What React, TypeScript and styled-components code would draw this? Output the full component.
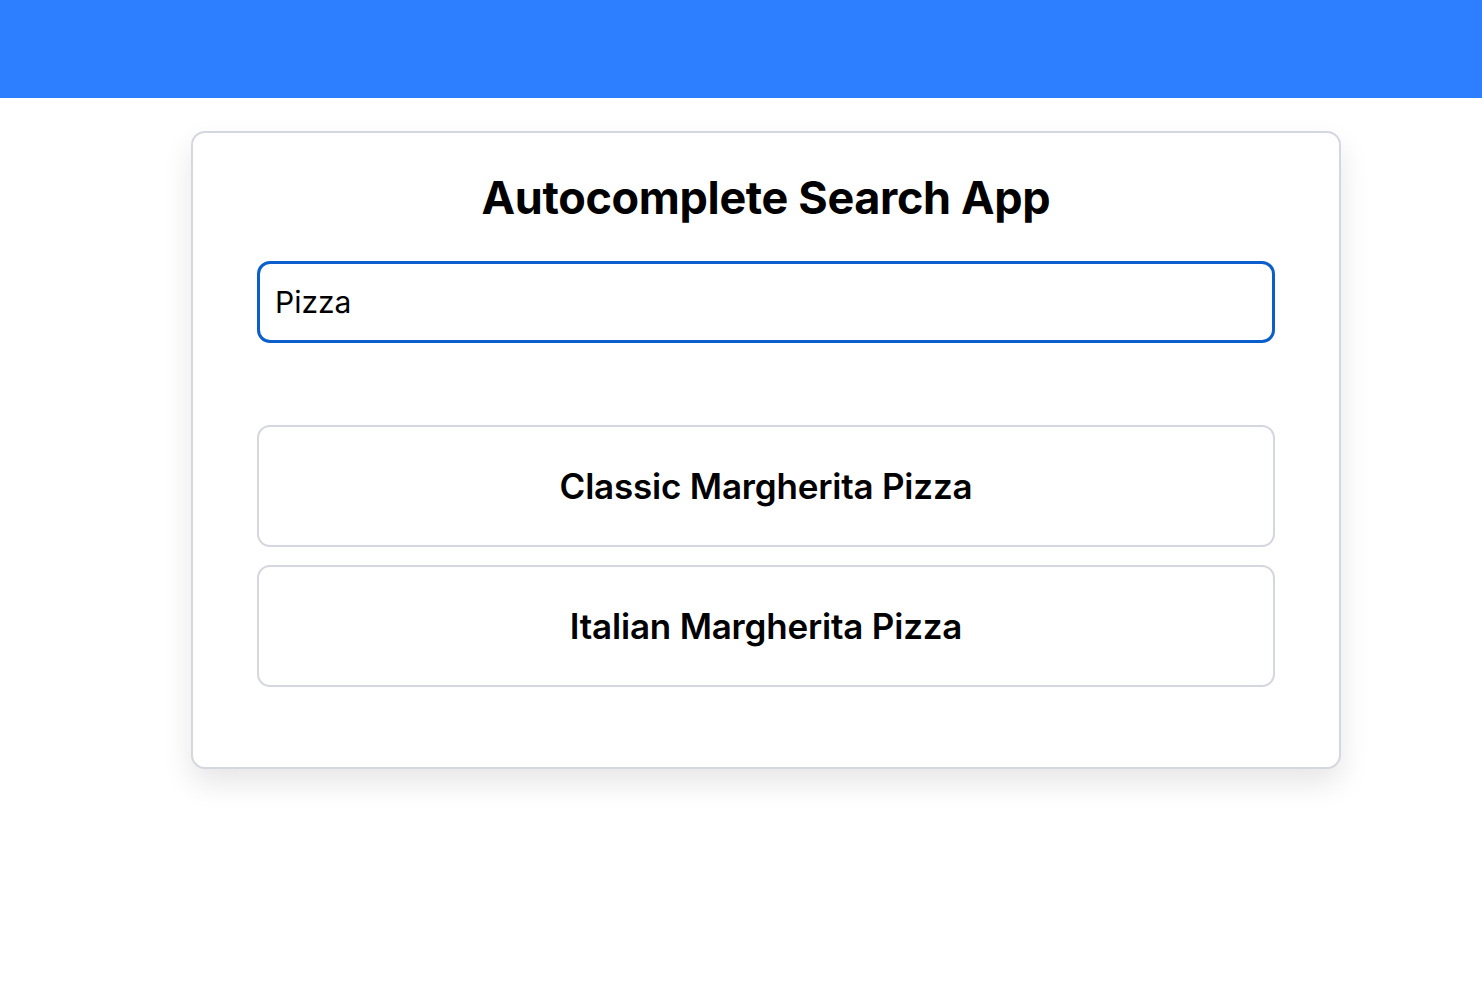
import React from "react";
import styled, { createGlobalStyle } from "styled-components";

const Global = createGlobalStyle`
  html, body { margin: 0; padding: 0; background: #ffffff; }
  body { font-family: Inter, "Noto Sans", sans-serif; color: #000; }
`;

const Header = styled.header`
  height: 98px;
  background: #2e7fff;
`;

const Main = styled.main`
  display: flex;
  justify-content: center;
  padding: 33px 0 120px 50px;
  min-height: 760px;
`;

const Card = styled.section`
  box-sizing: border-box;
  width: 1150px;
  height: 638px;
  border: 2px solid #d5d7de;
  border-radius: 14px;
  background: #fff;
  box-shadow: 0 14px 30px rgba(0, 0, 0, 0.1);
  padding: 0 64px;
  display: flex;
  flex-direction: column;
`;

const Title = styled.h1`
  margin: 38px 0 0;
  height: 54px;
  line-height: 54px;
  text-align: center;
  font-size: 45px;
  font-weight: 700;
  letter-spacing: -0.35px;
`;

const SearchInput = styled.input`
  box-sizing: border-box;
  margin-top: 36px;
  width: 100%;
  height: 82px;
  border: 3px solid #0a5fcc;
  border-radius: 13px;
  padding: 0 15px;
  font-family: Inter, "Noto Sans", sans-serif;
  font-size: 30px;
  color: #000;
  outline: none;
  caret-color: #000;
`;

const Results = styled.ul`
  list-style: none;
  margin: 82px 0 0;
  padding: 0;
  display: flex;
  flex-direction: column;
  gap: 18px;
`;

const ResultItem = styled.li`
  box-sizing: border-box;
  height: 122px;
  border: 2px solid #d5d7de;
  border-radius: 13px;
  display: flex;
  align-items: center;
  justify-content: center;
  font-size: 35px;
  font-weight: 600;
  letter-spacing: -0.2px;
`;

const results = ["Classic Margherita Pizza", "Italian Margherita Pizza"];

export default function App() {
  return (
    <>
      <Global />
      <Header />
      <Main>
        <Card>
          <Title>Autocomplete Search App</Title>
          <SearchInput defaultValue="Pizza" autoFocus />
          <Results>
            {results.map((r) => (
              <ResultItem key={r}>{r}</ResultItem>
            ))}
          </Results>
        </Card>
      </Main>
    </>
  );
}
